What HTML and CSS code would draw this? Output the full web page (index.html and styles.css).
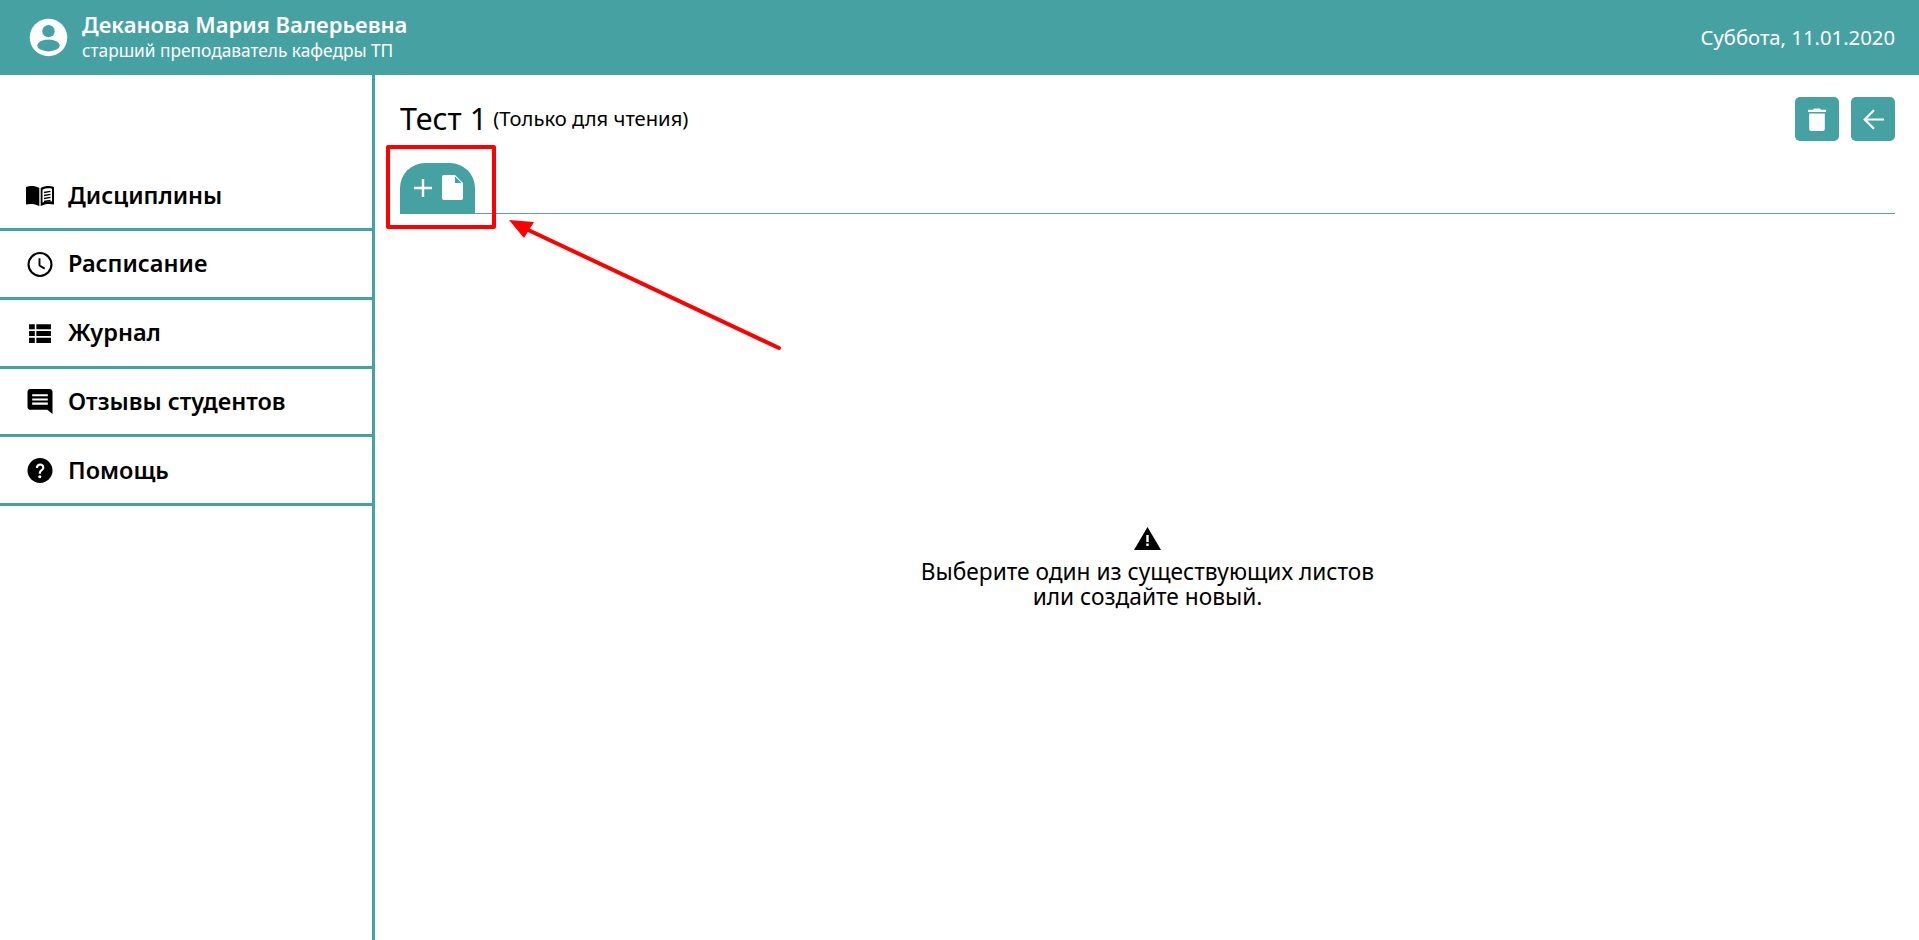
FILE: index.html
```html
<!DOCTYPE html>
<html>
<head>
  <title>Тест 1</title>
  <link rel="stylesheet" href="styles.css">
</head>
<body>

<header class="topbar">
  <svg class="avatar" viewBox="0 0 24 24"><path fill="#fff" d="M12 2a10 10 0 1 0 0 20 10 10 0 0 0 0-20z"/><circle cx="12" cy="8.600" r="3.300" fill="#46a2a2"/><ellipse cx="12" cy="16.200" rx="6" ry="3.200" fill="#46a2a2"/></svg>
  <div class="user">
    <div class="user-name">Деканова Мария Валерьевна</div>
    <div class="user-role">старший преподаватель кафедры ТП</div>
  </div>
  <div class="today">Суббота, 11.01.2020</div>
</header>

<div class="page">
  <nav class="sidebar">
    <a class="nav-item">
      <svg class="nav-icon" viewBox="0 0 28 24"><path d="M0 3.500c4.500-1.500 9-1.200 13.300 1v18C9 20.300 4.500 20 0 21z"/><path fill-rule="evenodd" d="M28 3.500c-4.500-1.500-9-1.200-13.300 1v18c4.300-2.200 8.800-2.500 13.300-1.500zM26 5.200c-3.500-.8-6.500-.5-9.500 1v12.700c3-1.200 6-1.500 9.500-1z"/><path d="M18 9l6.500-1.200M18 12l6.500-1.200M18 15l6.500-1.200M18 18l6.500-1.200" stroke="#000" stroke-width="1.300"/></svg>
      <span class="nav-label">Дисциплины</span>
    </a>
    <a class="nav-item">
      <svg class="nav-icon" viewBox="0 0 24 24"><circle cx="12" cy="12" r="11" fill="none" stroke="#000" stroke-width="2"/><path d="M11.500 6v7l5 3" fill="none" stroke="#000" stroke-width="1.800"/></svg>
      <span class="nav-label">Расписание</span>
    </a>
    <a class="nav-item">
      <svg class="nav-icon" viewBox="0 0 24 24"><path d="M1.500 3h5.500v5H1.500zM8.500 3h14v5h-14zM1.500 9.500h5.500v5H1.500zM8.500 9.500h14v5h-14zM1.500 16h5.500v5H1.500zM8.500 16h14v5h-14z"/></svg>
      <span class="nav-label">Журнал</span>
    </a>
    <a class="nav-item">
      <svg class="nav-icon" viewBox="0 0 24 24"><path d="M3 0h18a3 3 0 0 1 3 3v21l-5-4H3a3 3 0 0 1-3-3V3a3 3 0 0 1 3-3z"/><path d="M4.500 6h15M4.500 10h15M4.500 14h15" stroke="#fff" stroke-width="2"/></svg>
      <span class="nav-label">Отзывы студентов</span>
    </a>
    <a class="nav-item">
      <svg class="nav-icon" viewBox="0 0 24 24"><circle cx="12" cy="12" r="12"/><path d="M8 9.500c0-5.500 8.200-5.500 8.200-.5 0 3-3.400 3-3.400 6h-2c0-4 3.300-4 3.300-6 0-2.300-4-2.300-4 .5z" fill="#fff"/><circle cx="11.800" cy="18" r="1.500" fill="#fff"/></svg>
      <span class="nav-label">Помощь</span>
    </a>
  </nav>

  <main class="content">
    <div class="title-row">
      <h1 class="title">Тест 1</h1>
      <span class="readonly">(Только для чтения)</span>
      <div class="actions">
        <button class="icon-btn">
          <svg viewBox="0 0 18 23" width="18" height="23"><path fill="#fff" d="M1.200 5.500h15.600V21a2 2 0 0 1-2 2H3.200a2 2 0 0 1-2-2zM0 1.800h5L6 .5h6l1 1.300h5v2.200H0z"/></svg>
        </button>
        <button class="icon-btn">
          <svg viewBox="0 0 21 21" width="21" height="21"><path fill="none" stroke="#fff" stroke-width="2.200" d="M21 10.500H2.500M11 1.200 1.700 10.500l9.300 9.300"/></svg>
        </button>
      </div>
    </div>

    <div class="tabs">
      <div class="tab-add">
        <svg viewBox="0 0 20 20" width="20" height="20"><path stroke="#fff" stroke-width="2.400" d="M10 1v18M1 10h18"/></svg>
        <svg viewBox="0 0 21 25" width="21" height="25"><path fill="#fff" d="M2 0h11l8 8v15a2 2 0 0 1-2 2H2a2 2 0 0 1-2-2V2a2 2 0 0 1 2-2z"/><path fill="#46a2a2" d="M13 1.500 19.500 8H13z"/></svg>
      </div>
    </div>

    <div class="empty">
      <svg class="empty-icon" viewBox="0 0 27 23" width="27" height="23"><path d="M13.500 0 27 23H0z"/><path fill="#fff" d="M12.300 8h2.400v7h-2.400zM12.300 16.500h2.400V19h-2.400z"/></svg>
      <p class="empty-text">Выберите один из существующих листов<br>или создайте новый.</p>
    </div>
  </main>
</div>

<!-- annotation drawn over the screenshot -->
<div class="mark-box"></div>
<svg class="mark-arrow" viewBox="0 0 300 160" width="300" height="160">
  <path fill="none" stroke="#f00" stroke-width="4" stroke-linecap="round" d="M279 131 24 11"/>
  <path fill="#f00" d="M9 3 34 5 24 21z"/>
</svg>

</body>
</html>
```

FILE: styles.css
```css
body {
  margin: 0;
  height: 940px;
  overflow: hidden;
  display: flex;
  flex-direction: column;
  font-family: "Noto Sans", sans-serif;
  color: #000;
  background-color: #fff;
}
.topbar {
  height: 75px;
  flex-shrink: 0;
  display: flex;
  align-items: center;
  padding: 0 24px 0 26px;
  background-color: #46a2a2;
  color: #fff;
}
.avatar {
  width: 45px;
  height: 45px;
  margin-right: 11px;
}
.user-name {
  font-size: 22px;
  line-height: 28px;
  font-weight: 600;
  margin-top: -3px;
}
.user-role {
  font-size: 17.3px;
  line-height: 24px;
  margin-top: 1px;
}
.today {
  margin-left: auto;
  font-size: 20.3px;
  margin-top: -2px;
}
.page {
  flex: 1;
  display: flex;
}
.sidebar {
  width: 372px;
  flex-shrink: 0;
  padding-top: 88px;
  border-right: 3px solid #46a2a2;
}
.nav-item {
  height: 65px;
  padding-left: 26px;
  display: flex;
  align-items: center;
  font-size: 23.5px;
  font-weight: 600;
  border-bottom: 3px solid #46a2a2;
  margin-bottom: 0.75px;
}
.nav-icon {
  width: 28px;
  height: 25px;
  margin-right: 14px;
  flex-shrink: 0;
}
.nav-label {
  margin-top: -2px;
}
.content {
  flex: 1;
  display: flex;
  flex-direction: column;
  padding: 22px 24px 0 25px;
}
.title-row {
  height: 44px;
  display: flex;
  align-items: center;
}
.title {
  margin: -2px 6px 0 0;
  font-size: 30.5px;
  font-weight: 400;
}
.readonly {
  font-size: 20.2px;
  margin-top: -2px;
}
.actions {
  margin-left: auto;
  display: flex;
  gap: 12px;
}
.icon-btn {
  width: 44px;
  height: 44px;
  padding: 0;
  display: flex;
  align-items: center;
  justify-content: center;
  border: none;
  border-radius: 5px;
  background-color: #46a2a2;
}
.tabs {
  margin-top: 22px;
  height: 50px;
  display: flex;
  box-shadow: 0 1px 0 #5f9ea0;
}
.tab-add {
  width: 75px;
  height: 51px;
  flex-shrink: 0;
  box-sizing: border-box;
  padding-bottom: 2px;
  display: flex;
  align-items: center;
  justify-content: center;
  gap: 9px;
  border-radius: 25px 25px 0 0;
  background-color: #46a2a2;
}
.empty {
  margin-top: 314px;
  text-align: center;
}
.empty-icon {
  display: block;
  margin: 0 auto 9px;
}
.empty-text {
  margin: 0;
  font-size: 22.7px;
  line-height: 25px;
}
.mark-box {
  position: absolute;
  left: 386px;
  top: 145px;
  width: 102px;
  height: 76px;
  border: 4px solid #f00;
  border-radius: 2px;
}
.mark-arrow {
  position: absolute;
  left: 500px;
  top: 217px;
}
```
